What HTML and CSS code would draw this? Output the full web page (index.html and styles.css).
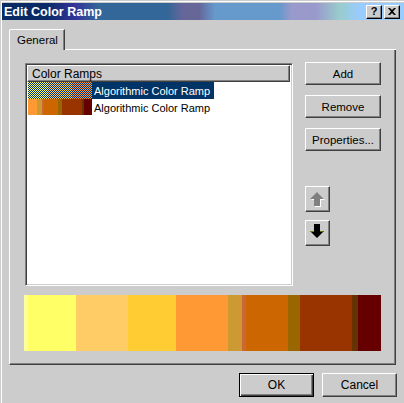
FILE: index.html
```html
<!DOCTYPE html>
<html>
<head>
<meta charset="utf-8">
<link rel="stylesheet" href="styles.css">
</head>
<body>
<div class="window">
  <div class="titlebar">
    <span class="title">Edit Color Ramp</span>
    <div class="tb-btns">
      <span class="tb-btn q">?</span>
      <span class="tb-btn"><svg width="8" height="7" viewBox="0 0 8 7"><path d="M0 0h2l2 2 2-2h2L5 3.5 8 7H6L4 5 2 7H0l3-3.5z" fill="#000"/></svg></span>
    </div>
  </div>
  <div class="tabs">
    <div class="tab">General</div>
    <div class="tab-fill"></div>
  </div>
  <div class="panel">
    <div class="top-row">
      <div class="list">
        <div class="list-head">Color Ramps</div>
        <div class="row sel"><span class="swatch s1"></span><span class="label">Algorithmic Color Ramp</span></div>
        <div class="row"><span class="swatch s2"></span><span class="label">Algorithmic Color Ramp</span></div>
      </div>
      <div class="side">
        <div class="btn">Add</div>
        <div class="btn">Remove</div>
        <div class="btn">Properties...</div>
        <div class="btn arrow up"><svg width="24" height="25" viewBox="0 0 24 25"><path d="M13 7l7 7h-4v7h-6v-7H6z" fill="#fff"/><path d="M12 6l7 7h-4v7H9v-7H5z" fill="#808080"/></svg></div>
        <div class="btn arrow down"><svg width="24" height="25" viewBox="0 0 24 25"><path d="M9 4h6v7h4l-7 7-7-7h4z" fill="#000"/><path d="M5 11h4v1H6z" fill="#808000"/><path d="M15 11h4l-1 1h-3z" fill="#666600"/></svg></div>
      </div>
    </div>
    <div class="ramp"></div>
  </div>
  <div class="footer">
    <div class="btn default">OK</div>
    <div class="btn">Cancel</div>
  </div>
</div>
</body>
</html>
```
FILE: styles.css
```css
html, body {
  margin: 0;
  padding: 0;
  background: #cccccc;
}
.window {
  width: 404px;
  height: 403px;
  box-sizing: border-box;
  padding: 3px 0 0 2px;
  background: #cccccc;
  box-shadow: inset 1px 1px 0 #cccccc, inset 2px 2px 0 #ffffff;
  font-family: "Liberation Sans", Arial, sans-serif;
  font-size: 11px;
  color: #000;
  overflow: hidden;
}
.titlebar {
  height: 17px;
  display: flex;
  align-items: center;
  justify-content: space-between;
  background: linear-gradient(to right,
    #0a2a66 0%, #0a2a66 11%, #333399 18%, #336699 24%, #336699 41%,
    #666699 45%, #666699 49%, #6699cc 53%, #6699cc 69%, #9999cc 72%,
    #9999cc 78%, #99cccc 84%, #99ccff 89%, #99ccff 100%);
}
.title {
  color: #fff;
  font-weight: bold;
  font-size: 12.5px;
  padding-left: 2px;
}
.tb-btns {
  display: flex;
  gap: 2px;
  padding-right: 4px;
}
.tb-btn {
  width: 16px;
  height: 14px;
  box-sizing: border-box;
  background: #cccccc;
  border-top: 1px solid #fff;
  border-left: 1px solid #fff;
  border-right: 1px solid #000;
  border-bottom: 1px solid #000;
  box-shadow: inset -1px -1px 0 #808080;
  display: flex;
  align-items: center;
  justify-content: center;
  font-weight: bold;
  font-size: 11px;
  line-height: 1;
}
.tabs {
  display: flex;
  align-items: flex-end;
  margin: 9px 0 0 7px;
  width: 387px;
}
.tab {
  height: 21px;
  box-sizing: border-box;
  padding: 0 6px 1px 7px;
  border-top: 1px solid #fff;
  border-left: 1px solid #fff;
  border-right: 1px solid #404040;
  border-top-left-radius: 2px;
  box-shadow: inset -1px 0 0 #808080;
  display: flex;
  align-items: center;
  justify-content: center;
  font-size: 11.5px;
}
.tab-fill {
  flex: 1;
  border-bottom: 1px solid #fff;
}
.panel {
  margin-left: 7px;
  width: 387px;
  height: 315px;
  box-sizing: border-box;
  border-left: 1px solid #fff;
  border-right: 1px solid #404040;
  border-bottom: 1px solid #404040;
  box-shadow: inset -1px -1px 0 #808080;
  padding: 13px 14px 0 15px;
  display: flex;
  flex-direction: column;
}
.top-row {
  display: flex;
  gap: 12px;
}
.list {
  width: 269px;
  height: 223px;
  box-sizing: border-box;
  background: #fff;
  border-top: 1px solid #808080;
  border-left: 1px solid #808080;
  border-right: 1px solid #fff;
  border-bottom: 1px solid #fff;
  box-shadow: inset 1px 1px 0 #404040, inset -1px -1px 0 #cccccc;
  padding: 1px 2px 0 1px;
}
.list-head {
  height: 17px;
  box-sizing: border-box;
  background: #cccccc;
  border-top: 1px solid #fff;
  border-left: 1px solid #fff;
  border-right: 1px solid #404040;
  border-bottom: 1px solid #404040;
  box-shadow: inset -1px -1px 0 #808080;
  padding-left: 4px;
  display: flex;
  align-items: center;
  font-size: 12px;
}
.row {
  height: 17px;
  display: flex;
  align-items: center;
  padding-left: 1px;
}
.swatch {
  width: 64px;
  height: 17px;
  flex: none;
}
.row + .row .swatch {
  height: 16px;
  align-self: flex-start;
}
.s1 {
  background:
    repeating-conic-gradient(#003366 0 25%, transparent 0 50%) 0 0 / 2px 2px,
    linear-gradient(to right, #ffff99 0 1px, #ffff66 1px 20px, #ffcc66 20px 32px, #ffcc33 32px 44px, #ff9933 44px 64px);
}
.s2 {
  background: linear-gradient(to right, #ff9933 0 9px, #cc9933 9px 14px, #cc6633 14px 16px, #cc6600 16px 30px, #996600 30px 34px, #993300 34px 54px, #663300 54px 56px, #660000 56px 64px);
}
.label {
  height: 17px;
  display: flex;
  align-items: center;
  padding: 0 4px 0 2px;
  font-size: 11px;
}
.sel .label {
  background: #003366;
  color: #fff;
}
.side {
  display: flex;
  flex-direction: column;
  gap: 10px;
  margin-top: -1px;
}
.btn {
  width: 76px;
  height: 23px;
  box-sizing: border-box;
  background: #cccccc;
  border-top: 1px solid #fff;
  border-left: 1px solid #fff;
  border-right: 1px solid #404040;
  border-bottom: 1px solid #404040;
  box-shadow: inset -1px -1px 0 #808080;
  display: flex;
  align-items: center;
  justify-content: center;
  font-size: 11.5px;
}
.btn.arrow {
  width: 25px;
  height: 26px;
  padding: 0;
  overflow: hidden;
  align-items: flex-start;
  justify-content: flex-start;
}
.btn.arrow svg {
  display: block;
  margin: -1px 0 0 -1px;
}
.btn.up {
  margin-top: 25px;
}
.btn.down {
  margin-top: -2px;
}
.ramp {
  margin: 9px 0 0 -1px;
  width: 357px;
  height: 56px;
  background: linear-gradient(to right,
    #ffff99 0 4px, #ffff66 4px 52px, #ffcc66 52px 104px, #ffcc33 104px 152px,
    #ff9933 152px 204px, #cc9933 204px 218px, #cc6633 218px 222px,
    #cc6600 222px 264px, #996600 264px 276px, #993300 276px 328px,
    #663300 328px 334px, #660000 334px 357px);
}
.footer {
  display: flex;
  justify-content: flex-end;
  gap: 8px;
  padding: 8px 7px 0 0;
}
.footer .btn {
  width: 75px;
  height: 24px;
  font-size: 12px;
}
.footer .btn.default {
  border: 1px solid #000;
  box-shadow: inset 1px 1px 0 #fff, inset -1px -1px 0 #404040, inset -2px -2px 0 #808080;
}
```
